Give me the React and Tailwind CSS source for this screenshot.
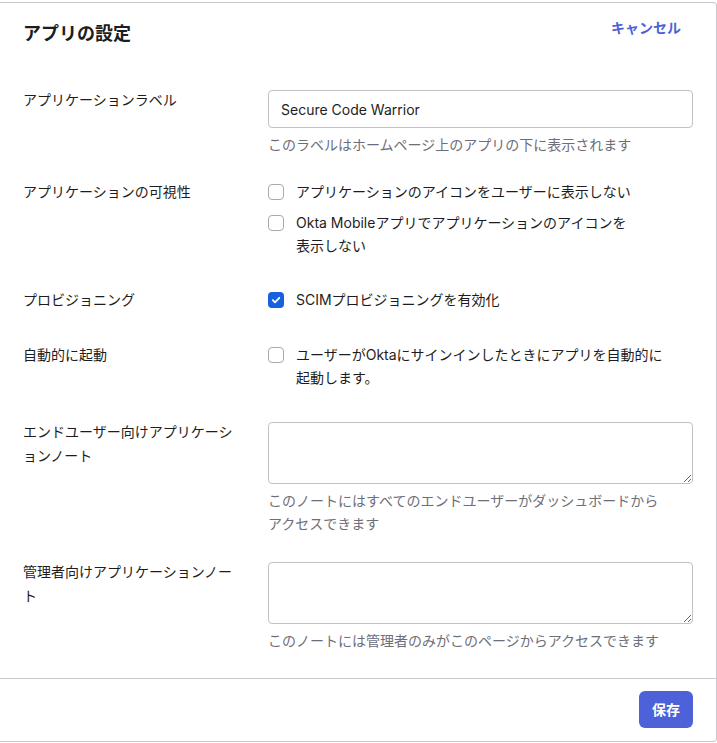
import React, { useState } from "react";

const font = { fontFamily: '"Inter", "Noto Sans CJK JP", sans-serif' };

const Checkbox = ({ checked, onChange, children }) => (
  <label className="flex items-start gap-3 cursor-pointer">
    <span
      className={
        checked
          ? "mt-[4px] w-4 h-4 shrink-0 rounded-[4px] bg-[#1662dd] flex items-center justify-center"
          : "mt-[4px] w-4 h-4 shrink-0 rounded-[4px] border-[1.5px] border-[#a9a9b2] bg-white"
      }
      onClick={onChange}
    >
      {checked && (
        <svg width="10" height="10" viewBox="0 0 10 10" fill="none">
          <path d="M1.8 5.2 L4 7.3 L8.3 2.8" stroke="white" strokeWidth="1.8" strokeLinecap="round" strokeLinejoin="round" />
        </svg>
      )}
    </span>
    <span className="text-sm leading-[23px] text-[#1d1d21]">{children}</span>
  </label>
);

const App = () => {
  const [label, setLabel] = useState("Secure Code Warrior");
  const [hideUser, setHideUser] = useState(false);
  const [hideMobile, setHideMobile] = useState(false);
  const [scim, setScim] = useState(true);
  const [autoLaunch, setAutoLaunch] = useState(false);
  const [userNote, setUserNote] = useState("");
  const [adminNote, setAdminNote] = useState("");

  return (
    <div className="bg-white min-h-[743px] pt-[2px]" style={font}>
      <div className="w-[717px] border-t border-r border-b border-[#c8c8ce] rounded-tr-[4px] rounded-br-[4px] bg-white">
        {/* Header */}
        <div className="flex items-start justify-between pl-[23px] pr-[35px] pt-[15px]">
          <h2 className="mt-[4px] text-[18px] leading-[24px] font-bold text-[#1d1d21]">アプリの設定</h2>
          <button className="text-sm leading-[20px] font-bold text-[#4d62d9]">キャンセル</button>
        </div>

        <div className="pl-[23px] pr-[23px]">
          {/* Label */}
          <div className="grid grid-cols-[245px_1fr] mt-[44px]">
            <div className="text-sm leading-[20px] text-[#1d1d21]">アプリケーションラベル</div>
            <div>
              <input
                type="text"
                value={label}
                onChange={(e) => setLabel(e.target.value)}
                className="w-full h-[38px] px-3 border border-[#c1c1c8] rounded-[4px] text-sm text-[#1d1d21] focus:outline-none"
              />
              <p className="mt-[5px] text-sm leading-[23px] text-[#6e6e78]">このラベルはホームページ上のアプリの下に表示されます</p>
            </div>
          </div>

          {/* Visibility */}
          <div className="grid grid-cols-[245px_1fr] mt-[24px]">
            <div className="text-sm leading-[23px] text-[#1d1d21]">アプリケーションの可視性</div>
            <div className="flex flex-col gap-2">
              <Checkbox checked={hideUser} onChange={() => setHideUser(!hideUser)}>
                アプリケーションのアイコンをユーザーに表示しない
              </Checkbox>
              <Checkbox checked={hideMobile} onChange={() => setHideMobile(!hideMobile)}>
                Okta Mobileアプリでアプリケーションのアイコンを
                <br />
                表示しない
              </Checkbox>
            </div>
          </div>

          {/* Provisioning */}
          <div className="grid grid-cols-[245px_1fr] mt-[31px]">
            <div className="text-sm leading-[23px] text-[#1d1d21]">プロビジョニング</div>
            <Checkbox checked={scim} onChange={() => setScim(!scim)}>
              SCIMプロビジョニングを有効化
            </Checkbox>
          </div>

          {/* Auto launch */}
          <div className="grid grid-cols-[245px_1fr] mt-[32px]">
            <div className="text-sm leading-[23px] text-[#1d1d21]">自動的に起動</div>
            <Checkbox checked={autoLaunch} onChange={() => setAutoLaunch(!autoLaunch)}>
              ユーザーがOktaにサインインしたときにアプリを自動的に
              <br />
              起動します。
            </Checkbox>
          </div>

          {/* End user note */}
          <div className="grid grid-cols-[245px_1fr] mt-[31px]">
            <div className="text-sm leading-[24px] text-[#1d1d21]">
              エンドユーザー向けアプリケーシ
              <br />
              ョンノート
            </div>
            <div>
              <textarea
                value={userNote}
                onChange={(e) => setUserNote(e.target.value)}
                className="block w-full mt-[2px] h-[62px] px-3 py-2 border border-[#c1c1c8] rounded-[4px] text-sm focus:outline-none"
              />
              <p className="mt-[5px] text-sm leading-[23px] text-[#6e6e78]">
                このノートにはすべてのエンドユーザーがダッシュボードから
                <br />
                アクセスできます
              </p>
            </div>
          </div>

          {/* Admin note */}
          <div className="grid grid-cols-[245px_1fr] mt-[25px]">
            <div className="text-sm leading-[24px] text-[#1d1d21]">
              管理者向けアプリケーションノー
              <br />
              ト
            </div>
            <div>
              <textarea
                value={adminNote}
                onChange={(e) => setAdminNote(e.target.value)}
                className="block w-full mt-[2px] h-[62px] px-3 py-2 border border-[#c1c1c8] rounded-[4px] text-sm focus:outline-none"
              />
              <p className="mt-[5px] text-sm leading-[23px] text-[#6e6e78]">このノートには管理者のみがこのページからアクセスできます</p>
            </div>
          </div>
        </div>

        {/* Footer */}
        <div className="mt-[26px] border-t border-[#c8c8ce] flex justify-end pt-[12px] pb-[13px] pr-[23px]">
          <button className="h-[37px] px-[13px] rounded-[6px] bg-[#4d62d9] text-white text-sm font-bold">保存</button>
        </div>
      </div>
    </div>
  );
};

export default App;
